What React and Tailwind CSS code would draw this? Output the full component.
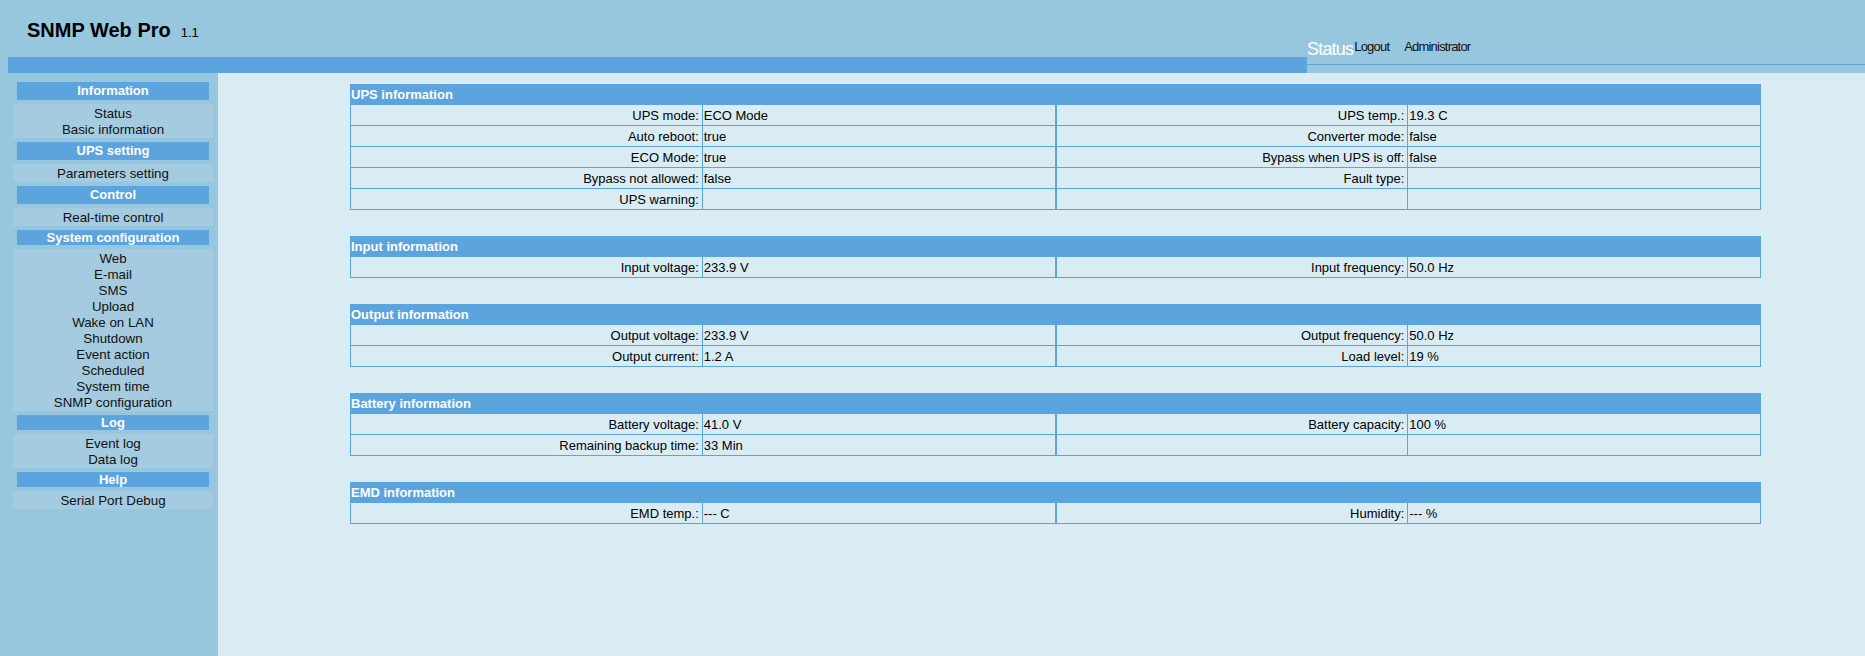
import React from "react";

const BLUE = "bg-[#5ca4dd]";

const menu = [
  { title: "Information", h: "h-[18px]", items: ["Status", "Basic information"] },
  { title: "UPS setting", h: "h-[18px]", items: ["Parameters setting"] },
  { title: "Control", h: "h-[18px]", items: ["Real-time control"] },
  {
    title: "System configuration",
    h: "h-[15px]",
    items: ["Web", "E-mail", "SMS", "Upload", "Wake on LAN", "Shutdown", "Event action", "Scheduled", "System time", "SNMP configuration"],
  },
  { title: "Log", h: "h-[15px]", items: ["Event log", "Data log"] },
  { title: "Help", h: "h-[15px]", items: ["Serial Port Debug"] },
];

const tables = [
  {
    title: "UPS information",
    rows: [
      ["UPS mode:", "ECO Mode", "UPS temp.:", "19.3 C"],
      ["Auto reboot:", "true", "Converter mode:", "false"],
      ["ECO Mode:", "true", "Bypass when UPS is off:", "false"],
      ["Bypass not allowed:", "false", "Fault type:", ""],
      ["UPS warning:", "", "", ""],
    ],
  },
  {
    title: "Input information",
    rows: [["Input voltage:", "233.9 V", "Input frequency:", "50.0 Hz"]],
  },
  {
    title: "Output information",
    rows: [
      ["Output voltage:", "233.9 V", "Output frequency:", "50.0 Hz"],
      ["Output current:", "1.2 A", "Load level:", "19 %"],
    ],
  },
  {
    title: "Battery information",
    rows: [
      ["Battery voltage:", "41.0 V", "Battery capacity:", "100 %"],
      ["Remaining backup time:", "33 Min", "", ""],
    ],
  },
  {
    title: "EMD information",
    rows: [["EMD temp.:", "--- C", "Humidity:", "--- %"]],
  },
];

function Half({ label, value }) {
  return (
    <div className="flex w-1/2 border-l border-r border-b border-[#5ca4dd]">
      <div className="w-1/2 border-r border-[#5ca4dd] text-right pr-[3px] pt-[1px] leading-[19px]">{label}</div>
      <div className="w-1/2 pl-[1px] pt-[1px] leading-[19px]">{value}</div>
    </div>
  );
}

function InfoTable({ t }) {
  return (
    <div className="w-[1411px]">
      <div className={`${BLUE} h-[21px] text-white font-bold leading-[21px] pl-[1px]`}>{t.title}</div>
      {t.rows.map((r, i) => (
        <div key={i} className="flex h-[21px]">
          <Half label={r[0]} value={r[1]} />
          <Half label={r[2]} value={r[3]} />
        </div>
      ))}
    </div>
  );
}

export default function App() {
  return (
    <div
      className="h-screen min-h-[656px] flex flex-col bg-[#97c6df] text-[13px] text-black"
      style={{ fontFamily: '"Liberation Sans", Arial, sans-serif' }}
    >
      {/* Header */}
      <div className="h-[57px] flex shrink-0">
        <div className="w-[1307px] pl-[27px] pt-[19px] flex items-baseline">
          <span className="text-[20px] font-bold leading-[23px]">SNMP Web Pro</span>
          <span className="ml-[10px] text-[13px] leading-[15px]">1.1</span>
        </div>
        <div className="flex items-start pt-[39px]">
          <span className="text-[18px] leading-[20px] tracking-[-0.8px] text-white">Status</span>
          <span className="ml-[1px] text-[13px] leading-[15px] tracking-[-0.8px] text-[#111]">Logout</span>
          <span className="ml-[15px] text-[13px] leading-[15px] tracking-[-0.8px] text-[#111]">Administrator</span>
        </div>
      </div>
      <div className="h-[16px] flex shrink-0">
        <div className="w-[8px]" />
        <div className={`w-[1299px] ${BLUE}`} />
        <div className="flex-1 mt-[7px] border-t border-[#5ca4dd]" />
      </div>

      {/* Body */}
      <div className="flex flex-1">
        <div className="w-[218px] shrink-0 pt-[9px]">
          <div className="ml-[13px] w-[200px] flex flex-col gap-[4px]">
            {menu.map((s) => (
              <React.Fragment key={s.title}>
                <div
                  className={`mx-[4px] ${s.h} ${BLUE} flex items-center justify-center text-white font-bold`}
                >
                  {s.title}
                </div>
                <div className="bg-[#a4cbdf] pt-[2px] flex flex-col items-center text-[#111] text-[13.33px]">
                  {s.items.map((it) => (
                    <div key={it} className="leading-[16px]">
                      {it}
                    </div>
                  ))}
                </div>
              </React.Fragment>
            ))}
          </div>
        </div>
        <div className="flex-1 bg-[#d9ecf4] pt-[11px] pl-[132px]">
          <div className="flex flex-col gap-[26px]">
            {tables.map((t) => (
              <InfoTable key={t.title} t={t} />
            ))}
          </div>
        </div>
      </div>
    </div>
  );
}
